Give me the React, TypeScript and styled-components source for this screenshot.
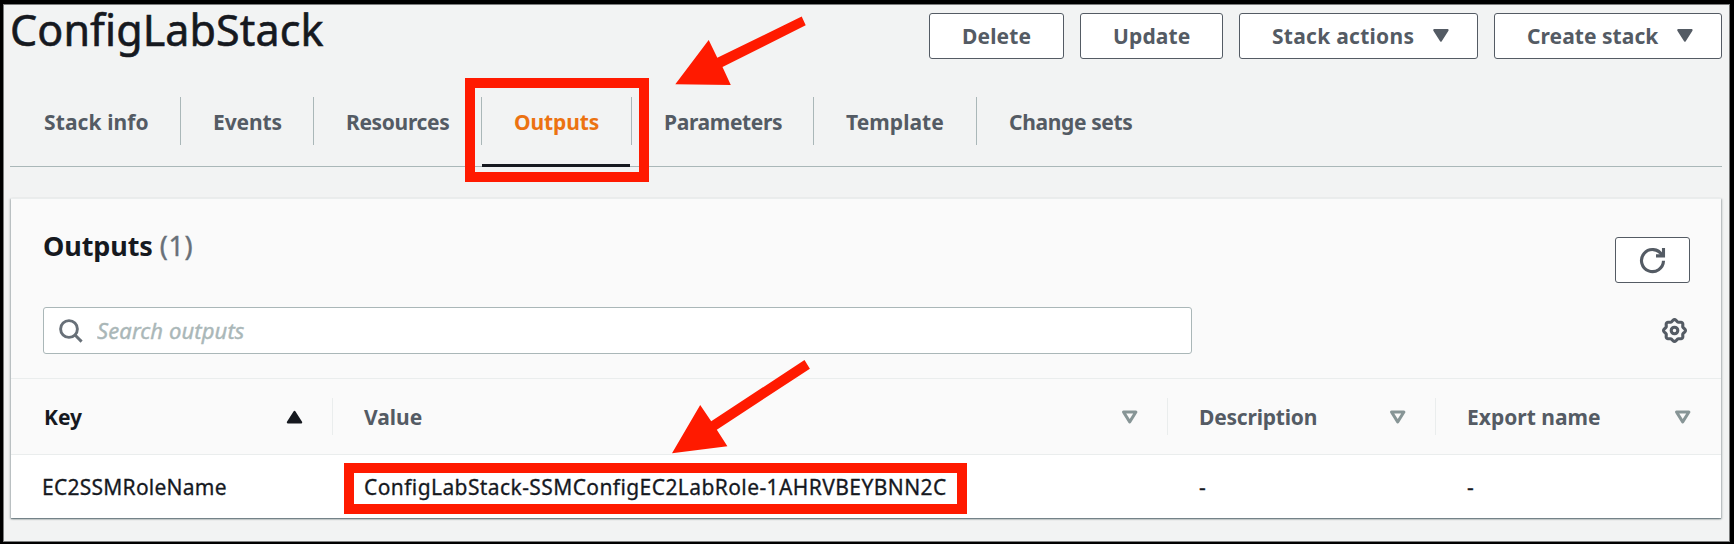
import React from 'react';
import styled, { createGlobalStyle } from 'styled-components';

const GlobalStyle = createGlobalStyle`
  *, *::before, *::after { box-sizing: border-box; }
  body {
    margin: 0;
    background: #000;
    color: #16191f;
    font-family: "Noto Sans", "Open Sans", sans-serif;
    font-size: 21px;
    -webkit-font-smoothing: antialiased;
  }
  button { font: inherit; margin: 0; cursor: pointer; }
`;

const RED = '#ff1a00';

const Frame = styled.div`
  position: relative;
  width: 1734px;
  height: 544px;
  padding: 4px 4px 2px 3px;
  background: #000;
  overflow: hidden;
`;

const Page = styled.main`
  height: 100%;
  padding: 8px 7px 0 6px;
  border: 1px solid #7c7d7d;
  background: #f2f3f3;
`;

const Header = styled.header`
  display: flex;
  justify-content: space-between;
  align-items: flex-start;
  height: 46px;
`;

const Title = styled.h1`
  margin: 0;
  font-size: 43px;
  font-weight: 400;
  line-height: 34px;
  letter-spacing: 0.1px;
  white-space: nowrap;
  -webkit-text-stroke: 0.6px currentColor;
`;

const Actions = styled.div`
  display: flex;
  gap: 16px;
`;

const Button = styled.button<{ $width: number; $spacing?: number }>`
  display: flex;
  align-items: center;
  justify-content: space-between;
  width: ${p => p.$width}px;
  height: 46px;
  padding: 0 28px 0 32px;
  border: 1px solid #545b64;
  border-radius: 3px;
  background: #fff;
  color: #545b64;
  font-weight: 700;
  letter-spacing: ${p => p.$spacing ?? 0.15}px;
  white-space: nowrap;
`;

const Tabs = styled.nav`
  display: flex;
  margin-top: 38px;
  padding-bottom: 21px;
  border-bottom: 1px solid #aab7b8;
`;

const Tab = styled.a<{ $width: number; $active?: boolean; $spacing?: number }>`
  position: relative;
  width: ${p => p.$width}px;
  height: 48px;
  padding-left: 32px;
  border-right: 1px solid #aab7b8;
  color: ${p => (p.$active ? '#ec7211' : '#545b64')};
  font-weight: 700;
  line-height: 51px;
  letter-spacing: ${p => p.$spacing ?? 0}px;
  white-space: nowrap;

  &:first-child { padding-left: 34px; }
  &:last-child { border-right: 0; }

  ${p =>
    p.$active &&
    `&::after {
      content: '';
      position: absolute;
      left: 0;
      right: 1px;
      bottom: -22px;
      height: 3px;
      background: #16191f;
    }`}
`;

const Panel = styled.section`
  margin: 31px 1px 0;
  border-top: 1px solid #eaeded;
  background: #fff;
  box-shadow: 0 1px 1px rgba(0, 28, 36, 0.3), 1px 1px 2px rgba(0, 28, 36, 0.25), -1px 1px 2px rgba(0, 28, 36, 0.25);
`;

const PanelHeader = styled.div`
  padding: 30px 31px 24px 32px;
  border-bottom: 1px solid #eaeded;
  background: #fafafa;
`;

const HeadingRow = styled.div`
  display: flex;
  justify-content: space-between;
  align-items: flex-start;
`;

const Heading = styled.h2`
  margin: 0;
  font-size: 27px;
  line-height: 33px;
  letter-spacing: -0.1px;
`;

const Count = styled.span`
  color: #687078;
  font-weight: 400;
  letter-spacing: 0.6px;
  -webkit-text-stroke: 0.4px currentColor;
`;

const RefreshButton = styled(Button)`
  justify-content: center;
  margin-top: 8px;
  padding: 0;
`;

const FilterRow = styled.div`
  display: flex;
  justify-content: space-between;
  align-items: center;
  margin-top: 24px;
  padding-right: 3px;
`;

const SearchBox = styled.label`
  display: flex;
  align-items: center;
  gap: 13px;
  width: 1149px;
  height: 47px;
  padding-left: 15px;
  border: 1px solid #aab7b8;
  border-radius: 3px;
  background: #fff;
`;

const SearchInput = styled.input`
  flex: 1;
  min-width: 0;
  height: 43px;
  padding: 0 0 2px;
  border: 0;
  outline: 0;
  background: transparent;
  font: italic 22px "Noto Sans", "Open Sans", sans-serif;
  letter-spacing: 0.1px;

  &::placeholder {
    color: #aab7b8;
    opacity: 1;
    -webkit-text-stroke: 0.4px currentColor;
  }
`;

const Columns = styled.div`
  display: grid;
  grid-template-columns: 322px 835px 268px 1fr;
`;

const HeadRow = styled(Columns)`
  height: 76px;
  padding: 19px 0;
  border-bottom: 1px solid #eaeded;
  background: #fafafa;
`;

const HeadCell = styled.div<{ $sorted?: boolean; $spacing?: number }>`
  display: flex;
  align-items: center;
  justify-content: space-between;
  padding: 0 29px 0 31px;
  border-right: 1px solid #eaeded;
  color: ${p => (p.$sorted ? '#16191f' : '#545b64')};
  font-weight: 700;
  letter-spacing: ${p => p.$spacing ?? 0}px;

  &:first-child { padding-left: 33px; }
  &:last-child { border-right: 0; padding-right: 30px; }
`;

const BodyRow = styled(Columns)`
  height: 63px;
  align-items: center;
`;

const Cell = styled.div<{ $spacing?: number }>`
  padding-left: 31px;
  letter-spacing: ${p => p.$spacing ?? 0}px;
  white-space: nowrap;
  -webkit-text-stroke: 0.3px currentColor;
`;

const Highlight = styled.div<{ $x: number; $y: number; $w: number; $h: number }>`
  position: absolute;
  left: ${p => p.$x}px;
  top: ${p => p.$y}px;
  width: ${p => p.$w}px;
  height: ${p => p.$h}px;
  border: 10px solid ${RED};
  pointer-events: none;
`;

const Arrows = styled.svg`
  position: absolute;
  left: 660px;
  top: 0;
  fill: ${RED};
  pointer-events: none;
`;

const Icon = styled.svg`
  display: block;
  flex: none;
  overflow: visible;
`;

const CaretDown = () => (
  <Icon width="16" height="14" viewBox="0 0 16 14">
    <path d="M1.2 1.1h13.4L7.9 11.7z" fill="#545b64" stroke="#545b64" strokeWidth="2" strokeLinejoin="round" />
  </Icon>
);

const SortAscending = () => (
  <Icon width="16" height="14" viewBox="0 0 16 14">
    <path d="M.8 12.4h13.4L7.5 1.9z" fill="#16191f" stroke="#16191f" strokeWidth="2" strokeLinejoin="round" />
  </Icon>
);

const SortNone = () => (
  <Icon width="16" height="14" viewBox="0 0 16 14">
    <path d="M1.5 2h12.4L7.7 11.9z" fill="none" stroke="#879596" strokeWidth="3" strokeLinejoin="round" />
  </Icon>
);

const SearchIcon = () => (
  <Icon width="25" height="25" viewBox="0 0 25 25" fill="none" stroke="#687078" strokeWidth="2.9">
    <circle cx="10" cy="11" r="8.4" />
    <path d="M16 17l6.6 6.6" />
  </Icon>
);

const RefreshIcon = () => (
  <Icon width="25" height="25" viewBox="0 0 25 25" fill="none" stroke="#545b64" strokeWidth="3.1">
    <path d="M23.5 12.8A11 11 0 1 1 22 7" />
    <path d="M23.5 0v7.9H16" />
  </Icon>
);

/* Eight soft teeth round the hub. */
const gearOutline =
  Array.from({ length: 96 }, (_, i) => {
    const a = (i / 96) * Math.PI * 2;
    const r = 10 + 0.95 * Math.cos(8 * a);
    return `${i ? 'L' : 'M'}${(12.5 + r * Math.sin(a)).toFixed(2)} ${(12.5 - r * Math.cos(a)).toFixed(2)}`;
  }).join('') + 'z';

const GearIcon = () => (
  <Icon width="25" height="25" viewBox="0 0 25 25" fill="none" stroke="#545b64" strokeWidth="3.1">
    <path d={gearOutline} />
    <circle cx="12.5" cy="12.5" r="3.3" />
  </Icon>
);

const tabs = [
  { label: 'Stack info', width: 171, spacing: 0.1 },
  { label: 'Events', width: 133, spacing: -0.1 },
  { label: 'Resources', width: 168, spacing: -0.35 },
  { label: 'Outputs', width: 150, active: true, spacing: -0.1 },
  { label: 'Parameters', width: 182, spacing: -0.35 },
  { label: 'Template', width: 163, spacing: 0.05 },
  { label: 'Change sets', width: 190, spacing: -0.35 },
];

export default function App() {
  return (
    <>
      <GlobalStyle />
      <Frame>
        <Page>
          <Header>
            <Title>ConfigLabStack</Title>
            <Actions>
              <Button $width={135}>Delete</Button>
              <Button $width={143}>Update</Button>
              <Button $width={239} $spacing={0.27}>Stack actions<CaretDown /></Button>
              <Button $width={228} $spacing={0.05}>Create stack<CaretDown /></Button>
            </Actions>
          </Header>
          <Tabs>
            {tabs.map(t => (
              <Tab key={t.label} $width={t.width} $active={t.active} $spacing={t.spacing}>{t.label}</Tab>
            ))}
          </Tabs>
          <Panel>
            <PanelHeader>
              <HeadingRow>
                <Heading>Outputs <Count>(1)</Count></Heading>
                <RefreshButton $width={75} aria-label="Refresh"><RefreshIcon /></RefreshButton>
              </HeadingRow>
              <FilterRow>
                <SearchBox>
                  <SearchIcon />
                  <SearchInput placeholder="Search outputs" />
                </SearchBox>
                <GearIcon />
              </FilterRow>
            </PanelHeader>
            <HeadRow>
              <HeadCell $sorted>Key<SortAscending /></HeadCell>
              <HeadCell>Value<SortNone /></HeadCell>
              <HeadCell $spacing={-0.2}>Description<SortNone /></HeadCell>
              <HeadCell>Export name<SortNone /></HeadCell>
            </HeadRow>
            <BodyRow>
              <Cell $spacing={0.25}>EC2SSMRoleName</Cell>
              <Cell $spacing={0.41}>ConfigLabStack-SSMConfigEC2LabRole-1AHRVBEYBNN2C</Cell>
              <Cell>-</Cell>
              <Cell>-</Cell>
            </BodyRow>
          </Panel>
        </Page>
        <Highlight $x={465} $y={78} $w={184} $h={104} />
        <Highlight $x={344} $y={463} $w={623} $h={51} />
        <Arrows width="160" height="460" viewBox="660 0 160 460">
          <path d="M675.3 84.3L708.7 40l8.6 17.8L801.7 16.5l4 8.8L722.5 67l8.3 18z" />
          <path d="M672 453.2L700.2 405l11 16.2L804.5 360l5.4 8.7-93.1 61 10.6 16.6z" />
        </Arrows>
      </Frame>
    </>
  );
}
